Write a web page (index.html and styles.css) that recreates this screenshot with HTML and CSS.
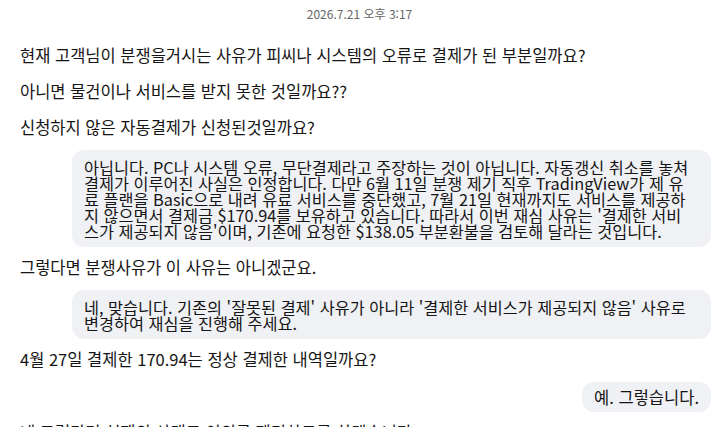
FILE: index.html
```html
<!DOCTYPE html>
<html lang="ko">
<head>
<meta charset="utf-8">
<title>채팅</title>
<link rel="stylesheet" href="styles.css">
</head>
<body>
<div class="chat">
  <div class="stamp">2026.7.21 오후 3:17</div>
  <div class="msg agent">현재 고객님이 분쟁을거시는 사유가 피씨나 시스템의 오류로 결제가 된 부분일까요?</div>
  <div class="msg agent">아니면 물건이나 서비스를 받지 못한 것일까요??</div>
  <div class="msg agent">신청하지 않은 자동결제가 신청된것일까요?</div>
  <div class="msg user long">아닙니다. PC나 시스템 오류, 무단결제라고 주장하는 것이 아닙니다. 자동갱신 취소를 놓쳐<br>결제가 이루어진 사실은 인정합니다. 다만 6월 11일 분쟁 제기 직후 TradingView가 제 유<br>료 플랜을 Basic으로 내려 유료 서비스를 중단했고, 7월 21일 현재까지도 서비스를 제공하<br>지 않으면서 결제금 $170.94를 보유하고 있습니다. 따라서 이번 재심 사유는 '결제한 서비<br>스가 제공되지 않음'이며, 기존에 요청한 $138.05 부분환불을 검토해 달라는 것입니다.</div>
  <div class="msg agent">그렇다면 분쟁사유가 이 사유는 아니겠군요.</div>
  <div class="msg user long">네, 맞습니다. 기존의 '잘못된 결제' 사유가 아니라 '결제한 서비스가 제공되지 않음' 사유로<br>변경하여 재심을 진행해 주세요.</div>
  <div class="msg agent">4월 27일 결제한 170.94는 정상 결제한 내역일까요?</div>
  <div class="msg user short">예. 그렇습니다.</div>
  <div class="msg agent">네 그렇다면 현재의 상태로 이의를 제기하도록 하겠습니다.</div>
</div>
</body>
</html>
```

FILE: styles.css
```css
html, body {
  margin: 0;
  padding: 0;
  background: #ffffff;
  height: 427px;
  overflow: hidden;
}

.chat {
  display: flex;
  flex-direction: column;
  gap: 2px;
  padding: 6px 16px 0 20px;
  font-family: "Noto Sans CJK KR", "Noto Sans", sans-serif;
  color: #151515;
}

.stamp {
  align-self: center;
  font-size: 12px;
  line-height: 16px;
  color: #666666;
  margin: 0 12px 14px 0;
}

.msg {
  font-size: 16.5px;
  line-height: 16px;
  white-space: nowrap;
}

.agent {
  padding: 9px 0;
}

.user {
  align-self: flex-end;
  font-size: 16.3px;
  background: #f0f1f5;
  border-radius: 12px;
  padding: 9px 12px 8px 12px;
  margin: 4px 0 1px 0;
}

.user.long {
  width: 615px;
}

.user.short {
  font-size: 16.5px;
  padding: 7px 12px 7px 12px;
}
```
